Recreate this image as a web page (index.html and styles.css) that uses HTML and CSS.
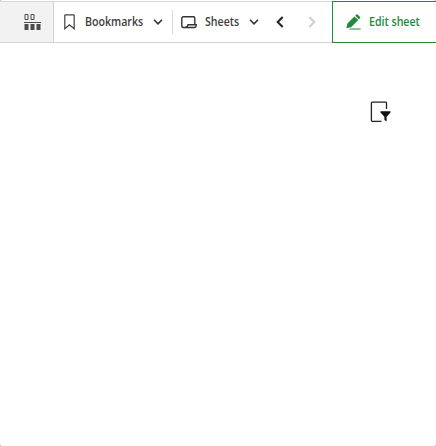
FILE: index.html
```html
<!DOCTYPE html>
<html lang="en">
<head>
<meta charset="utf-8">
<title>Sheet</title>
<link rel="stylesheet" href="styles.css">
</head>
<body>
<div class="window">
  <header class="toolbar">
    <div class="assets">
      <svg width="17" height="18" viewBox="0 0 17 18"><g fill="none" stroke="#4b4b4b"><path d="M1 1.5h3v5H1zM7 1.5h3v5H7z"/></g><path d="M0 9h17v1H0zM.5 11h4v6h-4zM6.5 11h4v6h-4zM12.5 11h4v6h-4z" fill="#4b4b4b"/></svg>
    </div>
    <button class="item bookmarks">
      <svg class="mark" width="11" height="16" viewBox="0 0 11 16"><path d="M.8 1.5Q.8.8 1.5.8h8q.7 0 .7.7v13.3L5.5 10.7.8 14.8z" fill="none" stroke="#404040" stroke-width="1.2"/></svg>
      <span class="label">Bookmarks</span>
      <svg class="chevron" width="10" height="6" viewBox="0 0 10 6"><path d="M1 .8l4 4 4-4" fill="none" stroke="#333" stroke-width="1.6"/></svg>
    </button>
    <button class="item sheets">
      <svg class="sheet" width="16" height="13" viewBox="0 0 16 13"><path d="M4.5 11.5H2.3Q.8 11.5.8 10V2.2Q.8.8 2.3.8h10.2q1.3 0 1.3 1.4v6.4M7 8.8h8.2v1q0 1.7-1.7 1.7H4Q6.4 11.3 7 8.8z" fill="none" stroke="#333" stroke-width="1.4"/></svg>
      <span class="label">Sheets</span>
      <svg class="chevron" width="10" height="6" viewBox="0 0 10 6"><path d="M1 .8l4 4 4-4" fill="none" stroke="#333" stroke-width="1.6"/></svg>
    </button>
    <nav class="pager">
      <svg width="8" height="12" viewBox="0 0 8 12"><path d="M6.7 1L1.7 6l5 5" fill="none" stroke="#252525" stroke-width="2.1"/></svg>
      <svg width="8" height="12" viewBox="0 0 8 12"><path d="M1.3 1l5 5-5 5" fill="none" stroke="#d0d0d0" stroke-width="2.1"/></svg>
    </nav>
    <button class="item edit">
      <svg width="15" height="16" viewBox="0 0 15 16"><path d="M1.4 9.4L8.4 2.4l3.9 3.7L5.1 13.2.3 14.3zM9.2 1.8L10.4.6q.6-.6 1.2 0l2.5 2.3q.6.6 0 1.2l-1.2 1.2zM4 14.4h10.7v1H3z" fill="#208b3a"/></svg>
      <span class="label">Edit sheet</span>
    </button>
  </header>
  <main class="canvas">
    <svg class="filter" width="22" height="22" viewBox="0 0 22 22"><path d="M11.5 20.3H2.2Q1.4 20.3 1.4 19.5V2Q1.4 1.2 2.2 1.2h13.5q.8 0 .8.8v6" fill="none" stroke="#222" stroke-width="1.3"/><path d="M10.5 10.2h10v1.3l-3.9 4.3v4.6l-2.2-1.5v-3.1l-3.9-4.3z" fill="#111"/></svg>
  </main>
</div>
</body>
</html>
```
FILE: styles.css
```css
* { box-sizing: border-box; }
body { margin: 0; background: #a6a6a6; }
.window { height: 446px; padding-top: 1px; overflow: hidden; background: #fff; border-radius: 2px; }
.toolbar { display: flex; height: 42px; border-top: 1px solid #d9d9d9; border-bottom: 1px solid #d4d4d4; }
svg { display: block; flex: none; }
.assets { display: flex; width: 54px; padding: 11px 0 0 24px; background: #f2f2f2; border-right: 1px solid #d4d4d4; }
.item { display: flex; align-items: center; padding: 0; border: 0; background: none; color: #404040; font: 600 12px/20px "Open Sans", sans-serif; }
.label { white-space: nowrap; flex: none; text-align: left; transform: scaleX(.885); transform-origin: left; }
.bookmarks { width: 118px; padding-left: 10px; }
.bookmarks .label { width: 59px; margin-left: 10px; }
.bookmarks .chevron { margin-left: 9px; }
.sheets { width: 103px; height: 24px; margin-top: 8px; padding-left: 8px; border-left: 1px solid #d9d9d9; }
.sheets .label { width: 35px; margin-left: 8px; }
.sheets .chevron { margin-left: 9px; }
.pager { display: flex; align-items: center; gap: 24px; width: 57px; padding-left: 1px; }
.edit { width: 104px; height: 42px; margin-top: -1px; padding-left: 13px; border: 1px solid #208b3a; border-right: 0; color: #208b3a; }
.edit .label { margin-left: 8px; }
.canvas { padding: 58px 0 0 370px; }
```
